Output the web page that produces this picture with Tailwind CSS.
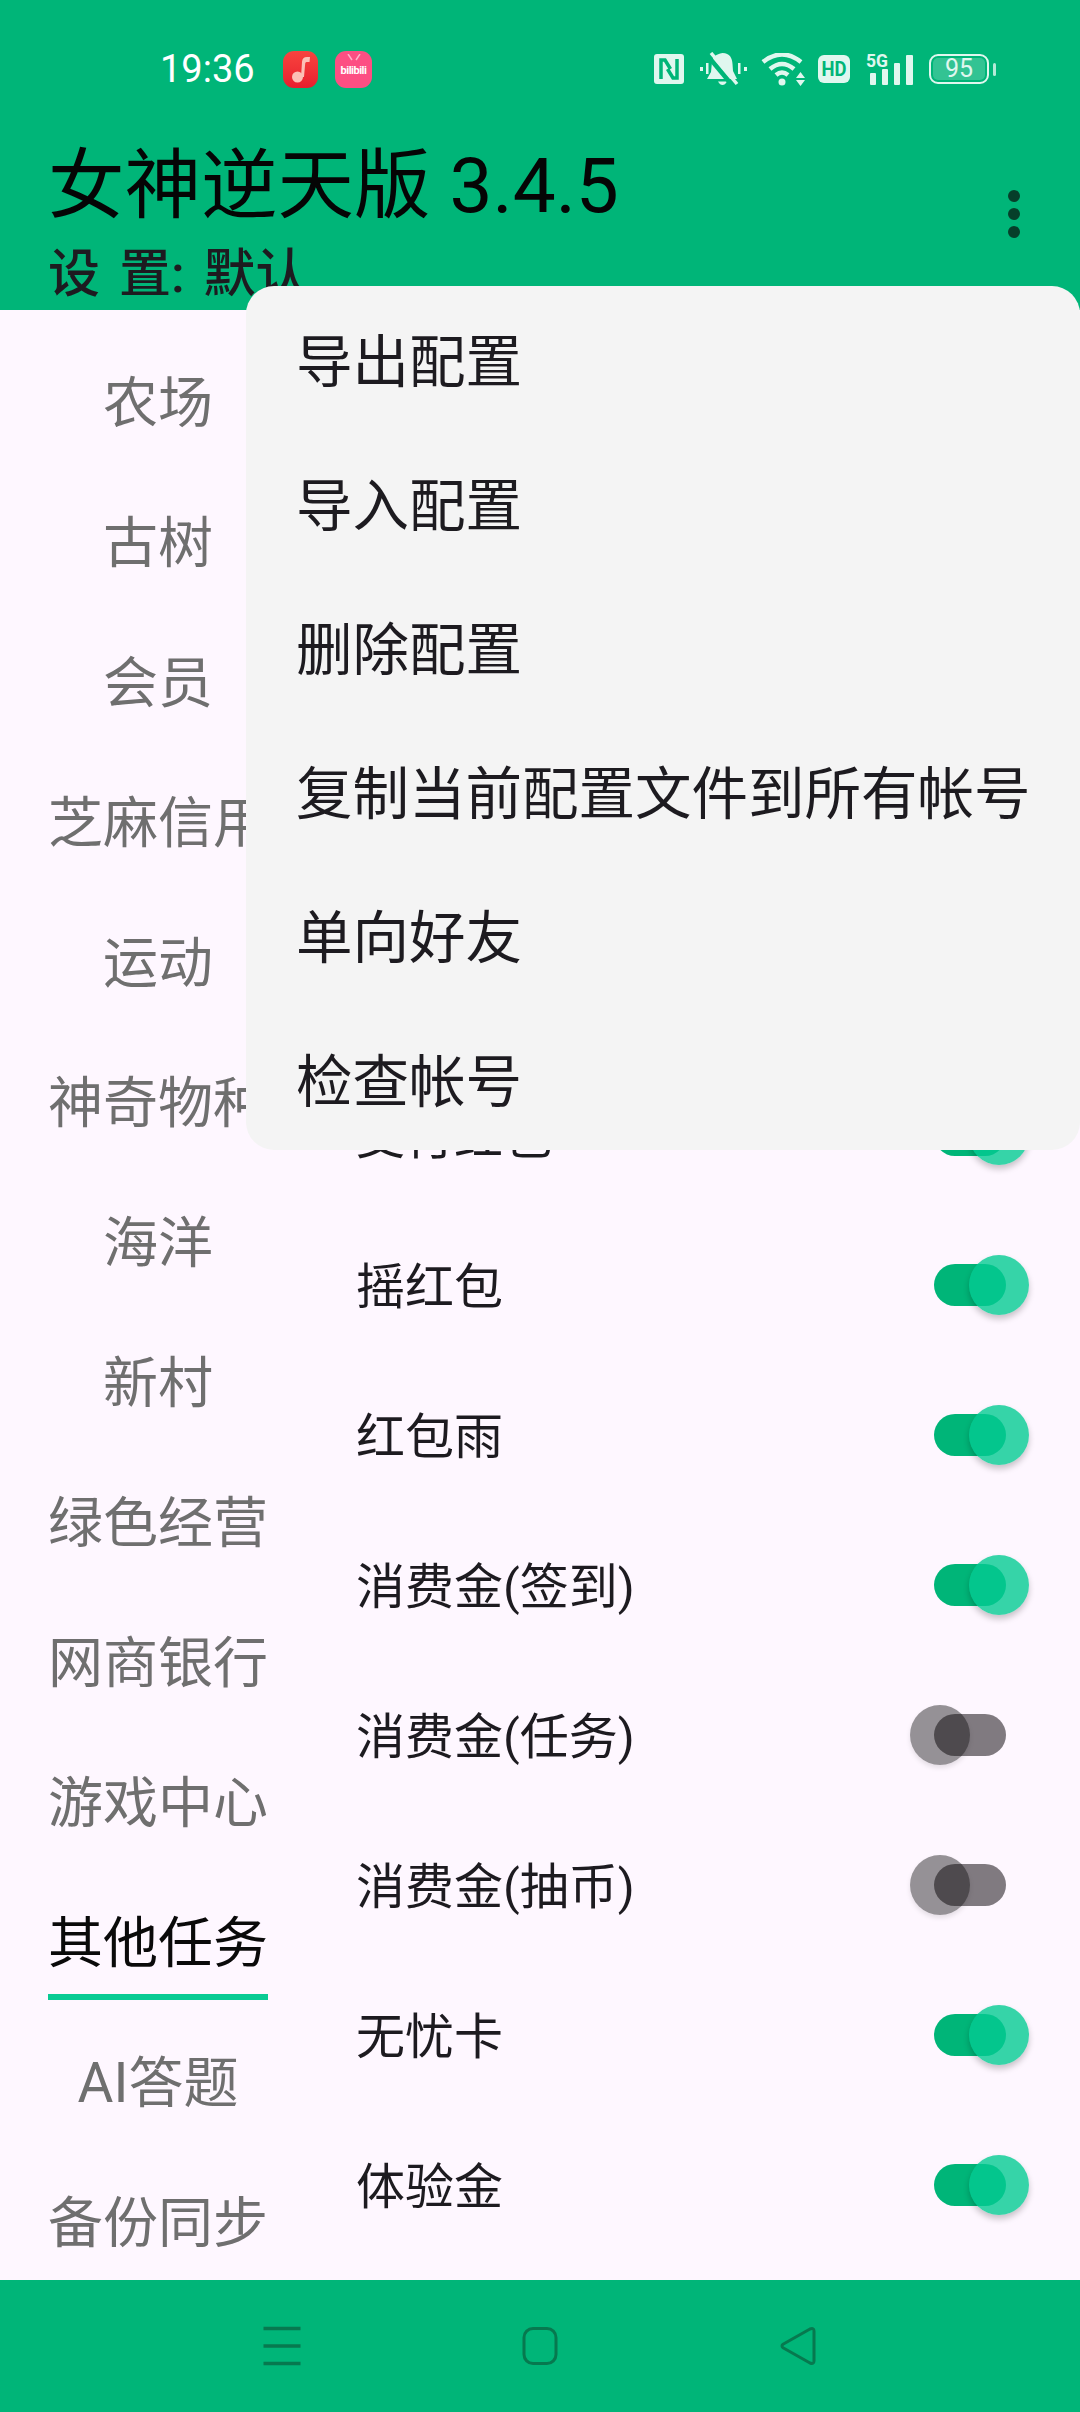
<!DOCTYPE html>
<html lang="zh-CN">

<head>
    <meta charset="UTF-8">
    <meta name="viewport" content="width=device-width, initial-scale=1.0">
    <title>女神逆天版</title>
    <script src="https://cdn.jsdelivr.net/npm/@tailwindcss/browser@4"></script>
</head>

<body class="[font-family:Roboto,'Noto_Sans_CJK_SC',sans-serif] bg-[#fef7ff]">
    <div class="relative w-[1080px] h-[2412px] overflow-hidden flex flex-col">

        <!-- header -->
        <header class="h-[310px] shrink-0 bg-[#00b578] flex flex-col">
            <div class="h-[138px] flex items-center pl-[160px] pr-[84px] text-[#e0f7ef]">
                <span class="w-[94px] text-[38px] leading-[40px] text-white">19:36</span>
                <div class="ml-[29px] w-[35px] h-[37px] rounded-[11px] bg-gradient-to-b from-[#f8433f] to-[#e81c2e] flex items-center justify-center">
                    <svg width="20" height="28" viewBox="0 0 20 28" fill="#fcc0b6">
                        <circle cx="6.5" cy="22" r="5.5" />
                        <path d="M10 22 L11 7 Q11.300 2 16 2 L19 2 L18.500 7 L15.500 7 Q14.300 7 14.200 8.500 L13 22 Z" />
                    </svg>
                </div>
                <div class="relative ml-[17px] w-[37px] h-[37px] rounded-[11px] bg-[#fd4f83] flex items-center justify-center">
                    <svg class="absolute top-[3px] left-[12px]" width="14" height="7" viewBox="0 0 14 7" stroke="#ffb3c9" stroke-width="1.500" fill="none">
                        <path d="M1 0 L5 6 M13 0 L9 6" />
                    </svg>
                    <span class="mt-[3px] text-[11px] leading-[12px] tracking-[-0.5px] font-bold text-white">bilibili</span>
                </div>

                <div class="ml-auto flex items-center">
                    <!-- nfc -->
                    <svg width="30" height="30" viewBox="0 0 30 30">
                        <rect width="30" height="30" rx="3" fill="#e0f7ef" />
                        <path d="M7 25 V6 H11 L16.500 15 M23 5 V24 H19 L13.500 15" fill="none" stroke="#00b578" stroke-width="3.500" />
                    </svg>
                    <!-- muted bell -->
                    <svg class="ml-[15px]" width="48" height="34" viewBox="0 0 48 34">
                        <path d="M1 15 h3 v4 h-3 z M7 11 h2.500 v11 h-2.500 z M39 11 h2.500 v11 h-2.500 z M45 15 h3 v4 h-3 z" fill="#e0f7ef" />
                        <path d="M23.500 1 C31 1 33 6 33.500 12 L34 19 L38 27 H8 L12 20 L13 10 C13.500 5 17 2 23.500 1 Z M19 29.500 H28 Q26 33 23.500 33 Q21 33 19 29.500 Z" fill="#e0f7ef" />
                        <path d="M8 3 L33 33" stroke="#00b578" stroke-width="4.500" />
                        <path d="M12 1 L38 32" stroke="#e0f7ef" stroke-width="3.500" />
                    </svg>
                    <!-- wifi -->
                    <svg class="ml-[14px]" width="45" height="33" viewBox="0 0 45 33">
                        <path d="M2 9 Q21 -6 40 9 M9 16 Q21 6 33 16 M15 22 Q21 17 27 22" fill="none" stroke="#e0f7ef" stroke-width="4.500" />
                        <circle cx="21" cy="29" r="3.500" fill="#e0f7ef" />
                        <path d="M35 25 L39.500 19 L44 25 Z M35 27 H44 L39.500 33 Z" fill="#e0f7ef" />
                    </svg>
                    <!-- hd -->
                    <svg class="ml-[12px]" width="32" height="28" viewBox="0 0 32 28">
                        <rect width="32" height="28" rx="6" fill="#e0f7ef" />
                        <text x="16" y="21" text-anchor="middle" font-size="21" font-weight="700" fill="#00b578" textLength="25" lengthAdjust="spacingAndGlyphs">HD</text>
                    </svg>
                    <!-- 5g signal -->
                    <svg class="ml-[16px]" width="47" height="32" viewBox="0 0 47 32" fill="#e0f7ef">
                        <text x="0" y="14" font-size="18" font-weight="700" textLength="22" lengthAdjust="spacingAndGlyphs">5G</text>
                        <rect x="4" y="20" width="6" height="12" rx="1" />
                        <rect x="16" y="16" width="6" height="16" rx="1" />
                        <rect x="28" y="10" width="6" height="22" rx="1" />
                        <rect x="40" y="2" width="7" height="30" rx="1" />
                    </svg>
                    <!-- battery -->
                    <div class="ml-[16px] flex items-center">
                        <div class="w-[60px] h-[30px] rounded-[9px] border-[2.5px] border-[#e0f7ef] p-[2px] flex">
                            <div class="flex-1 rounded-[5px] bg-white/20 flex items-center justify-center text-[25px] leading-[22px] text-[#e0f7ef]">95</div>
                        </div>
                        <div class="ml-[4px] w-[3px] h-[13px] rounded-full bg-[#e0f7ef]/80"></div>
                    </div>
                </div>
            </div>

            <div class="relative pl-[48px] pt-[3px]">
                <h1 class="text-[76.5px] leading-[90px] text-[#050505]">女神逆天版 3.4.5</h1>
                <h2 class="mt-[14px] text-[52px] leading-[60px] font-medium text-[#1d1b20] [word-spacing:6px]">设 置: 默认</h2>
                <div class="absolute right-[60px] top-[52px] flex flex-col gap-[6px]">
                    <span class="w-[12px] h-[12px] rounded-full bg-[#063f2a]"></span>
                    <span class="w-[12px] h-[12px] rounded-full bg-[#063f2a]"></span>
                    <span class="w-[12px] h-[12px] rounded-full bg-[#063f2a]"></span>
                </div>
            </div>
        </header>

        <!-- tabs + switch list -->
        <main class="flex-1 min-h-0 flex overflow-hidden">
            <nav class="w-[300px] shrink-0 pt-[22px] pl-[48px] text-[55px] text-[#6f6f6f]">
                <div class="w-[220px] h-[140px] pt-[2px] flex items-center justify-center">农场</div>
                <div class="w-[220px] h-[140px] pt-[2px] flex items-center justify-center">古树</div>
                <div class="w-[220px] h-[140px] pt-[2px] flex items-center justify-center">会员</div>
                <div class="w-[220px] h-[140px] pt-[2px] flex items-center justify-center whitespace-nowrap">芝麻信用</div>
                <div class="w-[220px] h-[140px] pt-[2px] flex items-center justify-center">运动</div>
                <div class="w-[220px] h-[140px] pt-[2px] flex items-center justify-center whitespace-nowrap">神奇物种</div>
                <div class="w-[220px] h-[140px] pt-[2px] flex items-center justify-center">海洋</div>
                <div class="w-[220px] h-[140px] pt-[2px] flex items-center justify-center">新村</div>
                <div class="w-[220px] h-[140px] pt-[2px] flex items-center justify-center whitespace-nowrap">绿色经营</div>
                <div class="w-[220px] h-[140px] pt-[2px] flex items-center justify-center whitespace-nowrap">网商银行</div>
                <div class="w-[220px] h-[140px] pt-[2px] flex items-center justify-center whitespace-nowrap">游戏中心</div>
                <div class="relative w-[220px] h-[140px] pt-[2px] flex items-center justify-center whitespace-nowrap text-[#0a0a0a]">
                    其他任务
                    <span class="absolute left-0 right-0 bottom-[12px] h-[6px] bg-[#0acb94]"></span>
                </div>
                <div class="w-[220px] h-[140px] pt-[2px] flex items-center justify-center whitespace-nowrap">AI答题</div>
                <div class="w-[220px] h-[140px] pt-[2px] flex items-center justify-center whitespace-nowrap">备份同步</div>
            </nav>

            <section class="flex-1 flex flex-col justify-end pb-[20px] pl-[56px] text-[49px] text-[#1d1b20]">
                <div class="h-[150px] flex items-center"><span class="mt-[5px]">支付红包</span>
                    <div class="relative ml-auto mr-[74px] w-[72px] h-[42px] rounded-full bg-[#00b578]">
                        <span class="absolute right-[-23px] top-[-9px] w-[60px] h-[60px] rounded-full bg-[rgba(4,202,146,.8)] shadow-[0_4px_6px_rgba(0,0,0,.22)]"></span>
                    </div>
                </div>
                <div class="h-[150px] flex items-center"><span class="mt-[5px]">摇红包</span>
                    <div class="relative ml-auto mr-[74px] w-[72px] h-[42px] rounded-full bg-[#00b578]">
                        <span class="absolute right-[-23px] top-[-9px] w-[60px] h-[60px] rounded-full bg-[rgba(4,202,146,.8)] shadow-[0_4px_6px_rgba(0,0,0,.22)]"></span>
                    </div>
                </div>
                <div class="h-[150px] flex items-center"><span class="mt-[5px]">红包雨</span>
                    <div class="relative ml-auto mr-[74px] w-[72px] h-[42px] rounded-full bg-[#00b578]">
                        <span class="absolute right-[-23px] top-[-9px] w-[60px] h-[60px] rounded-full bg-[rgba(4,202,146,.8)] shadow-[0_4px_6px_rgba(0,0,0,.22)]"></span>
                    </div>
                </div>
                <div class="h-[150px] flex items-center"><span class="mt-[5px]">消费金(签到)</span>
                    <div class="relative ml-auto mr-[74px] w-[72px] h-[42px] rounded-full bg-[#00b578]">
                        <span class="absolute right-[-23px] top-[-9px] w-[60px] h-[60px] rounded-full bg-[rgba(4,202,146,.8)] shadow-[0_4px_6px_rgba(0,0,0,.22)]"></span>
                    </div>
                </div>
                <div class="h-[150px] flex items-center"><span class="mt-[5px]">消费金(任务)</span>
                    <div class="relative ml-auto mr-[74px] w-[72px] h-[42px] rounded-full bg-[#807a80]">
                        <span class="absolute left-[-24px] top-[-9px] w-[60px] h-[60px] rounded-full bg-[rgba(12,12,12,.43)] shadow-[0_3px_5px_rgba(0,0,0,.1)]"></span>
                    </div>
                </div>
                <div class="h-[150px] flex items-center"><span class="mt-[5px]">消费金(抽币)</span>
                    <div class="relative ml-auto mr-[74px] w-[72px] h-[42px] rounded-full bg-[#807a80]">
                        <span class="absolute left-[-24px] top-[-9px] w-[60px] h-[60px] rounded-full bg-[rgba(12,12,12,.43)] shadow-[0_3px_5px_rgba(0,0,0,.1)]"></span>
                    </div>
                </div>
                <div class="h-[150px] flex items-center"><span class="mt-[5px]">无忧卡</span>
                    <div class="relative ml-auto mr-[74px] w-[72px] h-[42px] rounded-full bg-[#00b578]">
                        <span class="absolute right-[-23px] top-[-9px] w-[60px] h-[60px] rounded-full bg-[rgba(4,202,146,.8)] shadow-[0_4px_6px_rgba(0,0,0,.22)]"></span>
                    </div>
                </div>
                <div class="h-[150px] flex items-center"><span class="mt-[5px]">体验金</span>
                    <div class="relative ml-auto mr-[74px] w-[72px] h-[42px] rounded-full bg-[#00b578]">
                        <span class="absolute right-[-23px] top-[-9px] w-[60px] h-[60px] rounded-full bg-[rgba(4,202,146,.8)] shadow-[0_4px_6px_rgba(0,0,0,.22)]"></span>
                    </div>
                </div>
            </section>
        </main>

        <!-- navigation bar -->
        <footer class="h-[132px] shrink-0 bg-[#00b578] flex items-center justify-center gap-[218px]">
            <svg width="40" height="40" viewBox="0 0 40 40" stroke="#07794f" stroke-width="3.500" fill="none">
                <path d="M1.500 2.500 H38.500 M1.500 20 H38.500 M1.500 37.500 H38.500" />
            </svg>
            <svg width="40" height="40" viewBox="0 0 40 40" stroke="#07794f" stroke-width="3" fill="none">
                <rect x="4" y="2.500" width="32" height="35" rx="9" />
            </svg>
            <svg width="40" height="40" viewBox="0 0 40 40" stroke="#07794f" stroke-width="3" fill="none" stroke-linejoin="round">
                <path d="M4 20 Q4 19 5 18.300 L32 3 Q36 1.500 36 5 V35 Q36 38.500 32 37 L5 21.700 Q4 21 4 20 Z" />
            </svg>
        </footer>

        <!-- overflow menu -->
        <div class="absolute left-[246px] right-0 top-[286px] h-[864px] rounded-[28px] bg-[#f4f4f4] pl-[50px] pt-[5px] text-[56.5px] leading-[144px] text-[#1d1b20]">
            <div class="h-[144px]">导出配置</div>
            <div class="h-[144px]">导入配置</div>
            <div class="h-[144px]">删除配置</div>
            <div class="h-[144px] whitespace-nowrap">复制当前配置文件到所有帐号</div>
            <div class="h-[144px]">单向好友</div>
            <div class="h-[144px]">检查帐号</div>
        </div>
    </div>
</body>

</html>
